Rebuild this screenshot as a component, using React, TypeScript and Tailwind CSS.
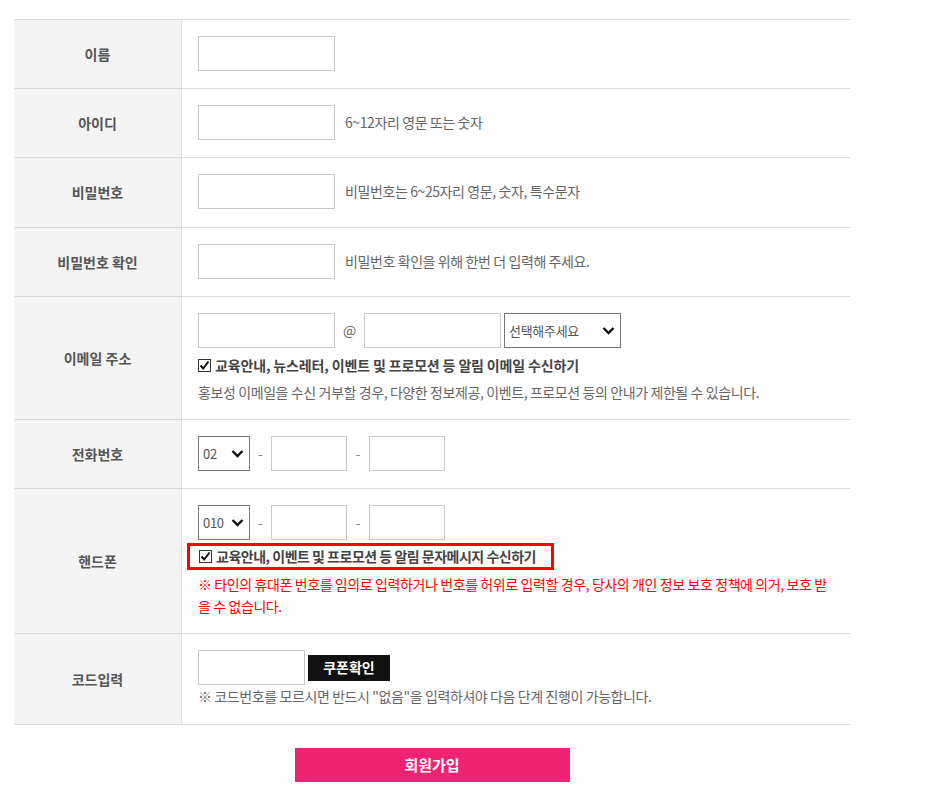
import { useState } from 'react';

const font = { fontFamily: '"Malgun Gothic", "Noto Sans CJK KR", "Noto Sans", sans-serif' };

const Chevron = () => (
  <svg width="13" height="9" viewBox="0 0 13 9" className="pointer-events-none absolute top-1/2 -translate-y-1/2 right-[6px]">
    <path d="M1.5 1.5 L6.5 6.5 L11.5 1.5" fill="none" stroke="#111" strokeWidth="2.4" />
  </svg>
);

const Select = ({ w, options }: { w: string; options: string[] }) => (
  <div className={`relative h-[35px] ${w}`}>
    <select className="h-full w-full appearance-none border border-[#767676] bg-white pl-[4px] text-[13px] tracking-[-0.3px] text-[#555] outline-none">
      {options.map((o) => (
        <option key={o}>{o}</option>
      ))}
    </select>
    <Chevron />
  </div>
);

const Input = ({ w = 'w-[137px]' }: { w?: string }) => (
  <input type="text" className={`h-[35px] ${w} border border-[#c8c8c8] bg-white px-2 text-[13px] outline-none`} />
);

const Check = ({ label, track = 'tracking-[-0.15px]' }: { label: string; track?: string }) => {
  const [on, setOn] = useState(true);
  return (
    <label
      className={`flex cursor-pointer items-center gap-[4px] whitespace-nowrap text-[14px] font-bold ${track} text-[#444]`}
      onClick={() => setOn(!on)}
    >
      <span className="flex h-[13px] w-[13px] items-center justify-center border border-[#333] bg-white">
        {on && (
          <svg width="11" height="11" viewBox="0 0 11 11">
            <path d="M1.5 5.5 L4.2 8.5 L9.5 1.5" fill="none" stroke="#111" strokeWidth="2" />
          </svg>
        )}
      </span>
      {label}
    </label>
  );
};

const Row = ({ label, pb = 'pb-[17px]', children }: { label: string; pb?: string; children: React.ReactNode }) => (
  <div className="flex border-b border-[#dcdcdc]">
    <div className="flex w-[168px] shrink-0 items-center justify-center border-r border-[#dcdcdc] bg-[#f4f4f4] text-[14px] font-bold text-[#555]">
      {label}
    </div>
    <div className={`flex-1 pl-4 pr-4 pt-4 ${pb}`}>{children}</div>
  </div>
);

const Note = ({ children }: { children: React.ReactNode }) => (
  <span className="text-[14px] tracking-[-0.4px] text-[#666]">{children}</span>
);

const Dash = ({ w = 'w-[21px]' }: { w?: string }) => (
  <span className={`${w} text-center text-[14px] text-[#888]`}>-</span>
);

export default function App() {
  return (
    <div className="min-h-[798px] bg-white" style={font}>
      <div className="pt-[19px] pl-[14px]">
        <div className="w-[836px] border-t border-[#dcdcdc]">
          <Row label="이름">
            <Input />
          </Row>
          <Row label="아이디">
            <div className="flex items-center gap-[10px]">
              <Input />
              <Note>6~12자리 영문 또는 숫자</Note>
            </div>
          </Row>
          <Row label="비밀번호" pb="pb-[18px]">
            <div className="flex items-center gap-[10px]">
              <Input />
              <Note>비밀번호는 6~25자리 영문, 숫자, 특수문자</Note>
            </div>
          </Row>
          <Row label="비밀번호 확인">
            <div className="flex items-center gap-[10px]">
              <Input />
              <Note>비밀번호 확인을 위해 한번 더 입력해 주세요.</Note>
            </div>
          </Row>
          <Row label="이메일 주소" pb="pb-4">
            <div className="flex items-center">
              <Input />
              <span className="w-[29px] text-center text-[14px] text-[#666]">@</span>
              <Input />
              <div className="ml-[3px]">
                <Select w="w-[117px]" options={['선택해주세요', 'naver.com', 'gmail.com', 'daum.net']} />
              </div>
            </div>
            <div className="mt-[6px] flex h-[22px] items-center">
              <Check label="교육안내, 뉴스레터, 이벤트 및 프로모션 등 알림 이메일 수신하기" />
            </div>
            <div className="mt-[5px] flex h-[22px] items-center">
              <Note>홍보성 이메일을 수신 거부할 경우, 다양한 정보제공, 이벤트, 프로모션 등의 안내가 제한될 수 있습니다.</Note>
            </div>
          </Row>
          <Row label="전화번호">
            <div className="flex items-center">
              <Select w="w-[52px]" options={['02', '031', '032', '051']} />
              <Dash />
              <Input w="w-[76px]" />
              <Dash w="w-[22px]" />
              <Input w="w-[76px]" />
            </div>
          </Row>
          <Row label="핸드폰" pb="pb-4">
            <div className="flex items-center">
              <Select w="w-[52px]" options={['010', '011', '016', '017']} />
              <Dash />
              <Input w="w-[76px]" />
              <Dash w="w-[22px]" />
              <Input w="w-[76px]" />
            </div>
            <div className="-ml-[11px] mt-[3px] inline-flex h-[27px] items-center border-[3px] border-[#ff0000] pl-[9px] pr-[15px]">
              <Check label="교육안내, 이벤트 및 프로모션 등 알림 문자메시지 수신하기" track="tracking-[-0.5px]" />
            </div>
            <p className="mt-[3px] text-[14px] leading-[22px] tracking-[-0.4px] text-[#ff0000]">
              ※ 타인의 휴대폰 번호를 임의로 입력하거나 번호를 허위로 입력할 경우, 당사의 개인 정보 보호 정책에 의거, 보호 받을 수 없습니다.
            </p>
          </Row>
          <Row label="코드입력">
            <div className="flex items-center">
              <Input w="w-[107px]" />
              <button className="ml-[3px] h-[26px] w-[82px] bg-[#111] text-[14px] font-bold text-white">쿠폰확인</button>
            </div>
            <div className="flex h-[22px] items-center">
              <Note>※ 코드번호를 모르시면 반드시 "없음"을 입력하셔야 다음 단계 진행이 가능합니다.</Note>
            </div>
          </Row>
        </div>
        <div className="flex w-[836px] justify-center pt-[23px]">
          <button className="h-[34px] w-[275px] bg-[#ef2374] text-[15px] font-bold text-white">회원가입</button>
        </div>
      </div>
    </div>
  );
}
